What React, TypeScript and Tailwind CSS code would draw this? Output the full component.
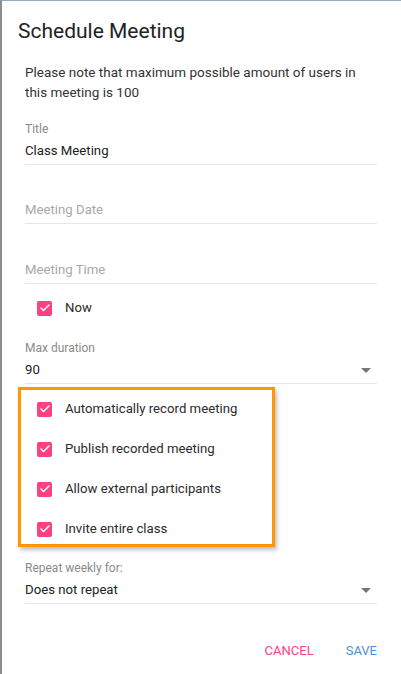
import { Check } from 'lucide-react';

const PINK = 'bg-[#ff4081]';

function CheckRow({ label }: { label: string }) {
  return (
    <div className="flex h-5 items-center">
      <span className={`flex h-[15px] w-[15px] items-center justify-center rounded-[2px] ${PINK}`}>
        <Check className="h-[12px] w-[12px] text-white" strokeWidth={3} />
      </span>
      <span className="ml-[13px] text-[13.2px] leading-5 text-[#2b2b2b]">{label}</span>
    </div>
  );
}

function Arrow() {
  return (
    <svg width="10" height="5" viewBox="0 0 10 5" className="mr-[6px] shrink-0">
      <path d="M0 0 L10 0 L5 5 Z" fill="#757575" />
    </svg>
  );
}

function Field({
  label,
  value,
  placeholder,
  select,
  className = '',
}: {
  label?: string;
  value?: string;
  placeholder?: string;
  select?: boolean;
  className?: string;
}) {
  return (
    <div className={className}>
      <div className="h-4 text-[12px] leading-4 text-[#8a8a8a]">{label}</div>
      <div className="mt-1 flex h-[24px] items-start border-b border-[#e6e6e6] pb-[3px]">
        <span className={`flex-1 text-[13.2px] leading-5 ${value ? 'text-[#212121]' : 'text-[#a8a8a8]'}`}>
          {value ?? placeholder}
        </span>
        {select && (
          <span className="flex h-5 items-center">
            <Arrow />
          </span>
        )}
      </div>
    </div>
  );
}

export default function App() {
  return (
    <div className="relative h-[674px] w-[401px] overflow-hidden border-l-2 border-t border-l-[#8c8c8c] border-t-[#97a8c2] bg-white font-['Roboto',sans-serif]">
      <span className="absolute -left-[2px] -top-px h-[8px] w-px bg-[#1f3f78]" />

      <h1 className="pl-4 pt-[18px] text-[21px] font-normal leading-6 text-[#222]">Schedule Meeting</h1>

      <div className="pl-[23px] pr-[24px]">
        <p className="mt-[19px] text-[13.5px] leading-5 text-[#333]">
          Please note that maximum possible amount of users in this meeting is 100
        </p>

        <Field className="mt-[19px]" label="Title" value="Class Meeting" />
        <Field className="mt-[15px]" placeholder="Meeting Date" />
        <Field className="mt-[16px]" placeholder="Meeting Time" />

        <div className="ml-[12px] mt-[14px]">
          <CheckRow label="Now" />
        </div>

        <Field className="mt-[22px]" label="Max duration" value="90" select />

        <div className="-ml-[7px] mt-[3px] w-[257px] border-[3px] border-[#ff9800] pb-[5px] pl-4 pt-[9px] shadow-[2px_3px_4px_rgba(0,0,0,0.25)]">
          <div className="flex flex-col gap-5">
            <CheckRow label="Automatically record meeting" />
            <CheckRow label="Publish recorded meeting" />
            <CheckRow label="Allow external participants" />
            <CheckRow label="Invite entire class" />
          </div>
        </div>

        <Field className="mt-[13px]" label="Repeat weekly for:" value="Does not repeat" select />

        <div className="mt-[37px] flex justify-end gap-8 text-[13px] leading-5">
          <button className="uppercase text-[#ff4081]">Cancel</button>
          <button className="uppercase text-[#4a90d9]">Save</button>
        </div>
      </div>
    </div>
  );
}
